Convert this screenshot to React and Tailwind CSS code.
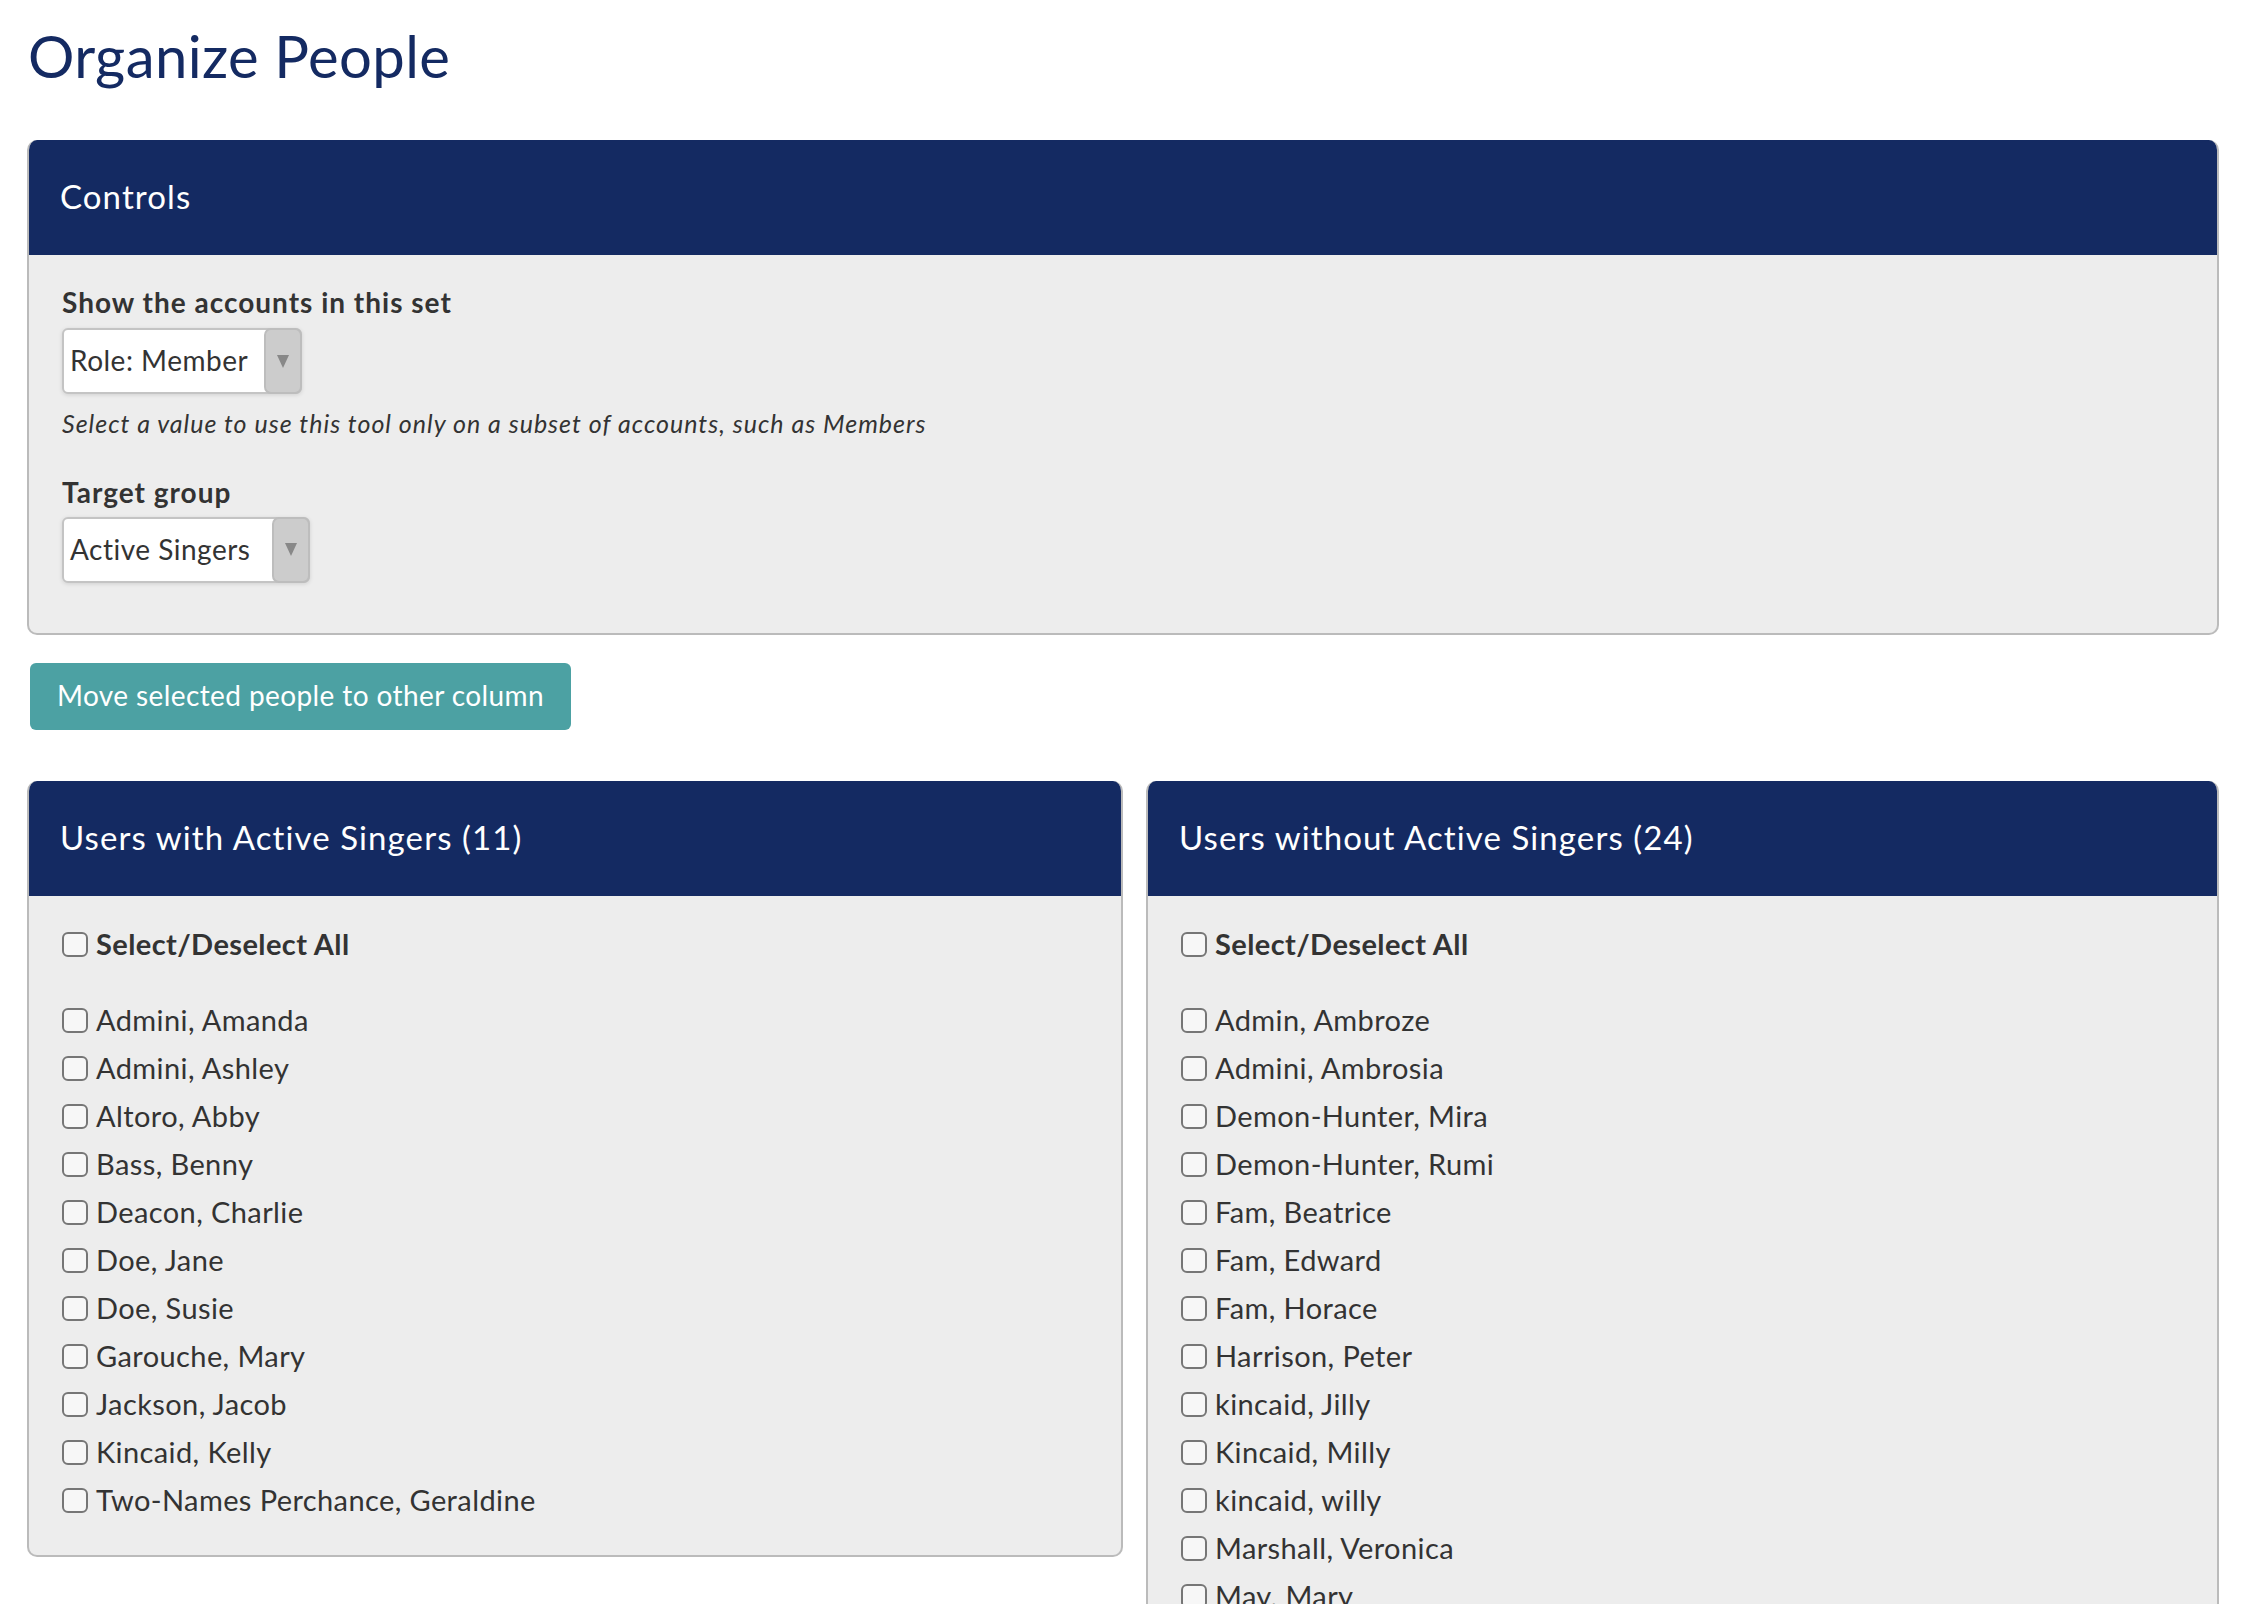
import React from 'react'

const WITH = [
  'Admini, Amanda',
  'Admini, Ashley',
  'Altoro, Abby',
  'Bass, Benny',
  'Deacon, Charlie',
  'Doe, Jane',
  'Doe, Susie',
  'Garouche, Mary',
  'Jackson, Jacob',
  'Kincaid, Kelly',
  'Two-Names Perchance, Geraldine',
]

const WITHOUT = [
  'Admin, Ambroze',
  'Admini, Ambrosia',
  'Demon-Hunter, Mira',
  'Demon-Hunter, Rumi',
  'Fam, Beatrice',
  'Fam, Edward',
  'Fam, Horace',
  'Harrison, Peter',
  'kincaid, Jilly',
  'Kincaid, Milly',
  'kincaid, willy',
  'Marshall, Veronica',
  'May, Mary',
  'Miller, Sam',
  'Nguyen, Anh',
  'Owens, Tara',
  'Parker, Lee',
  'Quinn, Rory',
  'Reed, Alex',
  'Smith, John',
  'Stone, Emma',
  'Taylor, Ruth',
  'Vance, Owen',
  'Young, Grace',
]

function Box() {
  return (
    <span className="inline-block w-[26px] h-[25px] shrink-0 rounded-[6px] border-2 border-[#767676] bg-[#f7f7f7]" />
  )
}

function Select({ value, width }) {
  return (
    <div className={`flex items-stretch h-[66px] ${width} rounded-[6px] border-2 border-[#c4c4c4] bg-white shadow-[0_1px_4px_rgba(0,0,0,0.12)]`}>
      <div className="flex-1 flex items-center pl-[6px] text-[28px] leading-[1.2] tracking-[0.5px] text-[#333]">{value}</div>
      <div className="w-[38px] rounded-[7px] border-2 border-[#bdbdbd] bg-[#cccccc] -my-[2px] -mr-[2px] flex items-center justify-center">
        <span className="block w-0 h-0 border-l-[6px] border-r-[6px] border-t-[13px] border-l-transparent border-r-transparent border-t-[#888]" />
      </div>
    </div>
  )
}

function Panel({ title, className = '', children }) {
  return (
    <div className={`rounded-[10px] overflow-hidden bg-[#ededed] border-2 border-t-0 border-[#bbbbbb] ${className}`}>
      <div className="h-[115px] bg-[#142a62] flex items-center px-[33px] -mx-[2px]">
        <h2 className="text-[33px] leading-[1.2] tracking-[1.1px] text-white">{title}</h2>
      </div>
      {children}
    </div>
  )
}

function List({ names }) {
  return (
    <div className="pt-[25px] pb-[30px] px-[33px] text-[29px] leading-[1.2] tracking-[0.4px] text-[#333]">
      <label className="flex items-center gap-[8px] h-[48px] mb-[28px] font-bold">
        <Box />
        <span>Select/Deselect All</span>
      </label>
      {names.map((n) => (
        <label key={n} className="flex items-center gap-[8px] h-[48px]">
          <Box />
          <span>{n}</span>
        </label>
      ))}
    </div>
  )
}

export default function App() {
  return (
    <div className="min-h-screen bg-white px-[27px] pb-[40px] text-[#333]" style={{ fontFamily: 'Lato, "Noto Sans", sans-serif' }}>
      <h1 className="pt-[21px] text-[58px] leading-[1.2] tracking-[0.4px] text-[#142a62] pl-[1px]">Organize People</h1>

      <Panel title="Controls" className="mt-[49px]">
        <div className="pt-[31px] pb-[50px] px-[33px]">
          <div className="text-[28px] leading-[1.2] tracking-[1px] font-bold">Show the accounts in this set</div>
          <div className="mt-[9px]">
            <Select value="Role: Member" width="w-[240px]" />
          </div>
          <p className="mt-[14px] text-[25px] leading-[1.2] tracking-[1px] italic">
            Select a value to use this tool only on a subset of accounts, such as Members
          </p>
          <div className="mt-[38px] text-[28px] leading-[1.2] tracking-[1px] font-bold">Target group</div>
          <div className="mt-[7px]">
            <Select value="Active Singers" width="w-[248px]" />
          </div>
        </div>
      </Panel>

      <button className="mt-[28px] ml-[3px] h-[67px] px-[27px] rounded-[6px] bg-[#4ca1a3] text-white text-[28px] leading-[1.2] tracking-[0.4px]">
        Move selected people to other column
      </button>

      <div className="mt-[51px] flex items-start gap-[23px]">
        <Panel title="Users with Active Singers (11)" className="w-[1096px]">
          <List names={WITH} />
        </Panel>
        <Panel title="Users without Active Singers (24)" className="flex-1">
          <List names={WITHOUT} />
        </Panel>
      </div>
    </div>
  )
}
